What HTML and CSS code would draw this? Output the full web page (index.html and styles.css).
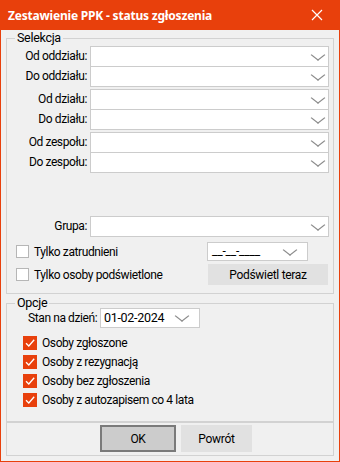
FILE: index.html
```html
<!DOCTYPE html>
<html lang="pl">
<head>
  <meta charset="UTF-8" />
  <title>Zestawienie PPK - status zgłoszenia</title>
  <link rel="stylesheet" href="styles.css">
</head>
<body>

  <div class="window">
    <div class="titlebar">
      <span class="title">Zestawienie PPK - status zgłoszenia</span>
      <svg class="close" width="12" height="12" viewBox="0 0 12 12">
        <path d="M1 1 L11 11 M11 1 L1 11" stroke="#fff" stroke-width="1.2" fill="none" />
      </svg>
    </div>

    <div class="content">
      <fieldset class="group selekcja">
        <legend>Selekcja</legend>

        <div class="combo-set">
          <div class="row"><label>Od oddziału:</label><div class="combo"><span class="chev"></span></div></div>
          <div class="row"><label>Do oddziału:</label><div class="combo"><span class="chev"></span></div></div>
        </div>

        <div class="combo-set">
          <div class="row"><label>Od działu:</label><div class="combo"><span class="chev"></span></div></div>
          <div class="row"><label>Do działu:</label><div class="combo"><span class="chev"></span></div></div>
        </div>

        <div class="combo-set">
          <div class="row"><label>Od zespołu:</label><div class="combo"><span class="chev"></span></div></div>
          <div class="row"><label>Do zespołu:</label><div class="combo"><span class="chev"></span></div></div>
        </div>

        <div class="combo-set grupa">
          <div class="row"><label>Grupa:</label><div class="combo"><span class="chev"></span></div></div>
        </div>

        <div class="check-row first">
          <span class="box"></span>
          <span class="check-text">Tylko zatrudnieni</span>
          <div class="date-combo empty"><span class="date-text">__-__-____</span><span class="chev"></span></div>
        </div>

        <div class="check-row second">
          <span class="box"></span>
          <span class="check-text">Tylko osoby podświetlone</span>
          <button class="btn highlight">Podświetl teraz</button>
        </div>
      </fieldset>

      <fieldset class="group opcje">
        <legend>Opcje</legend>

        <div class="stan-row">
          <label>Stan na dzień:</label>
          <div class="date-combo stan"><span class="date-text">01-02-2024</span><span class="chev"></span></div>
        </div>

        <div class="opts">
          <div class="opt"><span class="box checked"><svg width="14" height="14" viewBox="0 0 14 14"><path d="M3 7.2 L5.8 10 L11.2 3.8" stroke="#fff" stroke-width="1.3" fill="none" /></svg></span>Osoby zgłoszone</div>
          <div class="opt"><span class="box checked"><svg width="14" height="14" viewBox="0 0 14 14"><path d="M3 7.2 L5.8 10 L11.2 3.8" stroke="#fff" stroke-width="1.3" fill="none" /></svg></span>Osoby z rezygnacją</div>
          <div class="opt"><span class="box checked"><svg width="14" height="14" viewBox="0 0 14 14"><path d="M3 7.2 L5.8 10 L11.2 3.8" stroke="#fff" stroke-width="1.3" fill="none" /></svg></span>Osoby bez zgłoszenia</div>
          <div class="opt"><span class="box checked"><svg width="14" height="14" viewBox="0 0 14 14"><path d="M3 7.2 L5.8 10 L11.2 3.8" stroke="#fff" stroke-width="1.3" fill="none" /></svg></span>Osoby z autozapisem co 4 lata</div>
        </div>
      </fieldset>

      <div class="buttons">
        <button class="btn ok">OK</button>
        <button class="btn back">Powrót</button>
      </div>
    </div>
  </div>

</body>
</html>
```

FILE: styles.css
```css
body {
  margin: 0;
  font-family: Roboto, 'Noto Sans', sans-serif;
  font-size: 12px;
  letter-spacing: -0.4px;
  color: #000;
  background: #f0f0f0;
}

.window {
  width: 340px;
  height: 462px;
  box-sizing: border-box;
  border: 1px solid #e8400c;
  border-top: none;
  background: #f0f0f0;
}

.titlebar {
  height: 30px;
  margin: 0 -1px;
  background: #e8400c;
  display: flex;
  align-items: center;
  justify-content: space-between;
  padding: 0 12px 0 8px;
}

.title {
  color: #fff;
  font-family: 'Noto Sans', sans-serif;
  font-weight: bold;
  font-size: 12px;
  letter-spacing: -0.2px;
}

.close {
  display: block;
  margin-right: 5px;
}

.content {
  padding: 1px 5px 0;
}

.group {
  margin: 0;
  padding: 0 4px 0 0;
  border: 1px solid #d2d2d2;
  min-width: 0;
}

legend {
  margin-left: 8px;
  padding: 0 2px;
  line-height: 14px;
  font-size: 12.5px;
  letter-spacing: -0.3px;
}

.selekcja {
  height: 263px;
  box-sizing: border-box;
  padding-top: 1px;
}

.combo-set {
  margin-bottom: 2px;
}

.row {
  display: grid;
  grid-template-columns: 83px 239px;
  height: 21px;
}

.row + .row {
  margin-top: -1px;
}

.row label {
  text-align: right;
  padding-right: 3px;
  line-height: 21px;
  white-space: nowrap;
}

.combo {
  background: #fff;
  border: 1px solid #cccccc;
  position: relative;
}

.chev {
  position: absolute;
  right: 4px;
  top: 50%;
  width: 7px;
  height: 7px;
  margin-top: -6px;
  border-right: 1px solid #8a8a8a;
  border-bottom: 1px solid #8a8a8a;
  transform: scaleX(1.3) rotate(45deg);
}

.combo .chev {
  right: 6px;
}

.grupa {
  margin-top: 43px;
}

.check-row {
  display: flex;
  align-items: center;
  padding-left: 9px;
}

.check-row.first {
  margin-top: 5px;
  height: 19px;
}

.check-row.second {
  margin-top: 3px;
  height: 21px;
}

.box {
  width: 13px;
  height: 13px;
  box-sizing: border-box;
  border: 1px solid #b6b6b6;
  background: #fff;
  flex: none;
}

.check-text {
  margin-left: 5px;
  flex: 1;
}

.date-combo {
  position: relative;
  background: #fff;
  border: 1px solid #cccccc;
  box-sizing: border-box;
}

.date-combo.empty {
  width: 101px;
  height: 19px;
  margin-right: 21px;
}

.date-text {
  display: block;
  padding-left: 4px;
  line-height: 17px;
}

.empty .date-text {
  letter-spacing: -0.2px;
}

.empty .chev {
  right: 13px;
}

.btn {
  font-family: Roboto, 'Noto Sans', sans-serif;
  font-size: 12px;
  letter-spacing: -0.3px;
  color: #000;
  background: #e1e1e1;
  border: none;
  padding: 0;
}

.highlight {
  width: 120px;
  height: 21px;
  margin-right: 1px;
}

.opcje {
  margin-top: 2px;
  height: 126px;
  box-sizing: border-box;
}

.stan-row {
  display: flex;
  align-items: center;
  height: 20px;
  margin-top: -2px;
  padding-left: 21px;
}

.stan-row label {
  width: 72px;
  white-space: nowrap;
}

.date-combo.stan {
  width: 100px;
  height: 20px;
}

.stan .date-text {
  line-height: 18px;
  padding-left: 3px;
  font-size: 12.5px;
  letter-spacing: -0.3px;
}

.stan .chev {
  right: 13px;
}

.opts {
  padding: 5px 0 0 16px;
}

.opt {
  display: flex;
  align-items: center;
  height: 19px;
}

.box.checked {
  width: 14px;
  height: 14px;
  border: none;
  background: #e8400c;
  margin-right: 5px;
}

.box.checked svg {
  display: block;
}

.buttons {
  height: 34px;
  box-sizing: border-box;
  border: 1px solid #d2d2d2;
  padding: 2px 0 0 93px;
  display: flex;
  gap: 5px;
}

.ok {
  width: 76px;
  height: 27px;
  background: #cccccc;
  border: 2px solid #7a7a7a;
}

.back {
  width: 71px;
  height: 27px;
}
```
